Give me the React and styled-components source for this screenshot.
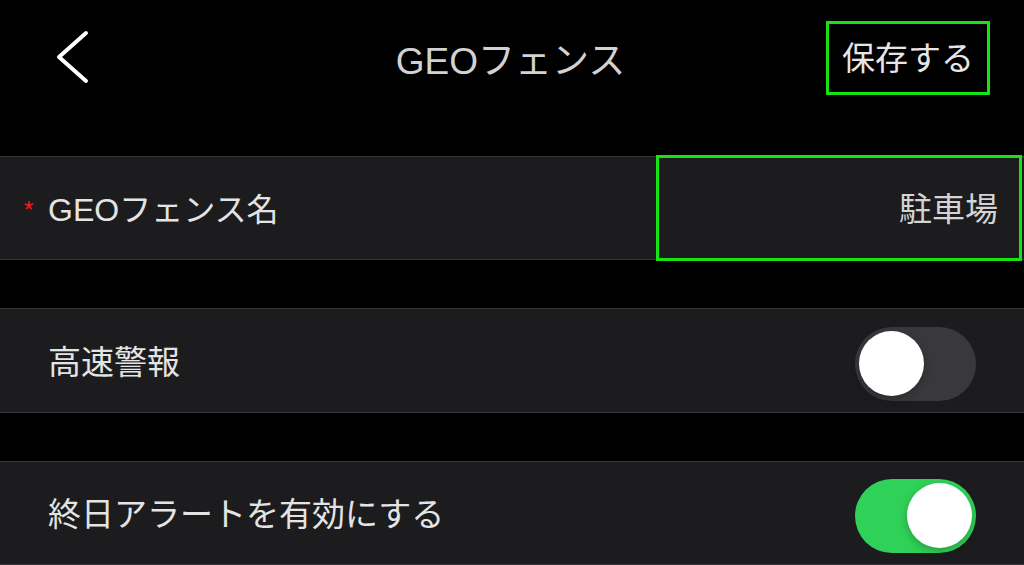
import React from 'react';
import styled, { createGlobalStyle } from 'styled-components';

const GlobalStyle = createGlobalStyle`
  html, body {
    margin: 0;
    padding: 0;
    background: #000;
  }
  body {
    font-family: "Liberation Sans", "Noto Sans CJK JP", sans-serif;
    overflow: hidden;
  }
`;

const HIGHLIGHT = '#14e414';

const Page = styled.div`
  width: 1024px;
  height: 565px;
  background: #000;
  display: flex;
  flex-direction: column;
  gap: 48px;
  overflow: hidden;
`;

const NavBar = styled.header`
  height: 116px;
  margin-bottom: -8px;
  padding-bottom: 1px;
  display: grid;
  grid-template-columns: 1fr auto 1fr;
  align-items: center;
  padding-left: 34px;
  padding-right: 34px;
`;

const BackButton = styled.button`
  justify-self: start;
  background: none;
  border: none;
  padding: 0;
  margin: -1px 0 0 22px;
  display: flex;
  cursor: pointer;
`;

const Title = styled.h1`
  margin: 0 3px 0 0;
  font-size: 37px;
  font-weight: 400;
  color: #d2d2d2;
`;

const SaveButton = styled.button`
  justify-self: end;
  width: 164px;
  height: 74px;
  box-sizing: border-box;
  border: 3px solid ${HIGHLIGHT};
  background: transparent;
  color: #e6e6e6;
  font-family: "Noto Sans CJK JP", sans-serif;
  font-size: 33px;
  padding: 0 0 4px 0;
  cursor: pointer;
`;

const Row = styled.div`
  height: 103px;
  background: #1c1c1e;
  border-top: 1px solid #38383a;
  border-bottom: 1px solid #38383a;
  display: flex;
  align-items: center;
  padding-left: 24px;
  padding-right: ${p => (p.$flush ? '2px' : '48px')};
`;

const Label = styled.span`
  flex: 1;
  display: flex;
  align-items: center;
  padding-left: ${p => (p.$required ? '0' : '24px')};
  font-family: "Liberation Sans", "Noto Sans CJK JP", sans-serif;
  font-size: ${p => (p.$required ? '32px' : '33px')};
  color: #e4e4e4;
  padding-bottom: 2px;
`;

const Required = styled.span`
  color: #ff1a1a;
  font-size: 24px;
  width: 24px;
  margin-top: 6px;
`;

const ValueBox = styled.div`
  align-self: stretch;
  margin: -2px 0;
  width: 366px;
  box-sizing: border-box;
  border: 3px solid ${HIGHLIGHT};
  display: flex;
  align-items: center;
  justify-content: flex-end;
  padding: 0 21px 2px 0;
  font-family: "Noto Sans CJK JP", sans-serif;
  font-size: 33px;
  color: #d4d4d4;
`;

const Switch = styled.div`
  width: 121px;
  height: 74px;
  border-radius: 37px;
  background: ${p => (p.$on ? '#30d158' : '#39393d')};
  display: flex;
  align-items: center;
  justify-content: ${p => (p.$on ? 'flex-end' : 'flex-start')};
  padding: 0 4px;
  box-sizing: border-box;
  margin-top: 6px;
`;

const Knob = styled.div`
  width: 65px;
  height: 65px;
  border-radius: 50%;
  background: #fff;
  box-shadow: 0 3px 8px rgba(0, 0, 0, 0.25);
`;

const Chevron = () => (
  <svg width="36" height="54" viewBox="0 0 36 54">
    <polyline
      points="30,3 3,27 30,51"
      fill="none"
      stroke="#fff"
      strokeWidth="4"
      strokeLinecap="round"
      strokeLinejoin="round"
    />
  </svg>
);

export default function App() {
  return (
    <Page>
      <GlobalStyle />
      <NavBar>
        <BackButton aria-label="back">
          <Chevron />
        </BackButton>
        <Title>GEOフェンス</Title>
        <SaveButton>保存する</SaveButton>
      </NavBar>

      <Row $flush>
        <Label $required>
          <Required>*</Required>
          GEOフェンス名
        </Label>
        <ValueBox>駐車場</ValueBox>
      </Row>

      <Row>
        <Label>高速警報</Label>
        <Switch>
          <Knob />
        </Switch>
      </Row>

      <Row>
        <Label>終日アラートを有効にする</Label>
        <Switch $on>
          <Knob />
        </Switch>
      </Row>
    </Page>
  );
}
